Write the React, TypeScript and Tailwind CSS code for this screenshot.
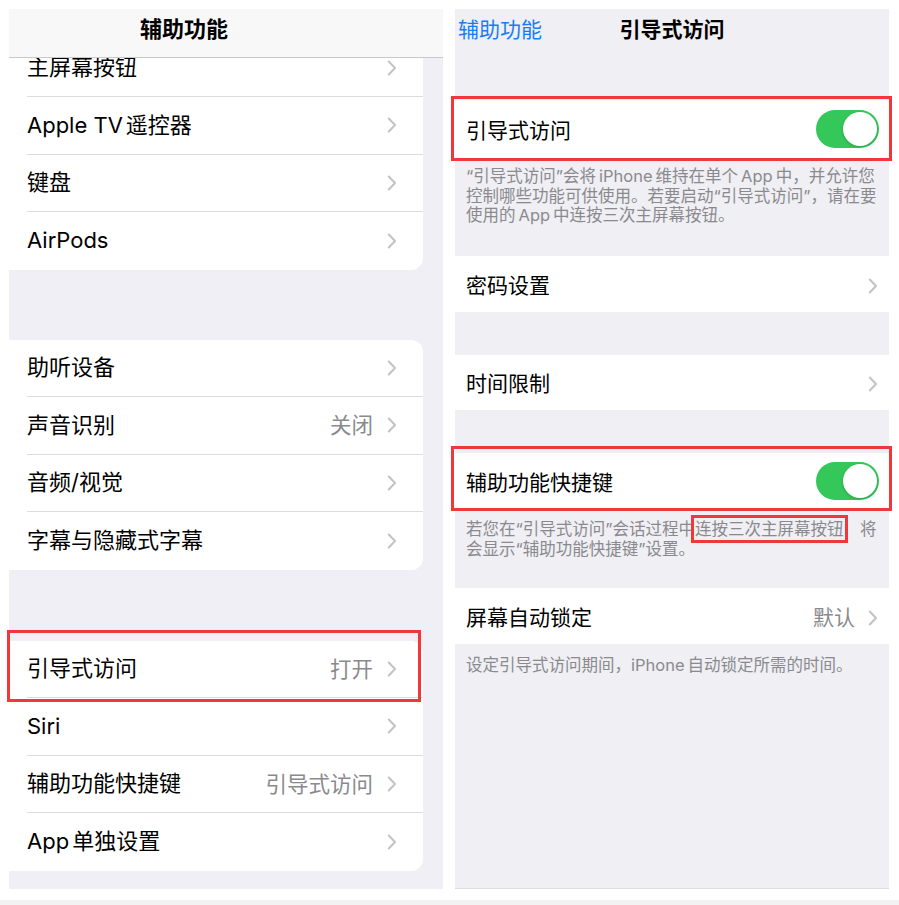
import React from "react";

const FONT = "font-['Inter','Noto_Sans_CJK_SC',sans-serif]";

const Chevron = () => (
  <svg width="10" height="16" viewBox="0 0 10 16" className="shrink-0">
    <path d="M1.8 1.6 L8 8 L1.8 14.4" fill="none" stroke="#c4c4c8" strokeWidth="2.1" strokeLinecap="round" strokeLinejoin="round" />
  </svg>
);

const Toggle = () => (
  <div className="w-[63px] h-[38px] rounded-full bg-[#34c759] p-[2px] flex justify-end shrink-0">
    <div className="w-[34px] h-[34px] rounded-full bg-white shadow-[0_1px_3px_rgba(0,0,0,0.18)]" />
  </div>
);

type Row = { label: React.ReactNode; key: string; value?: string };

const LeftCard = ({ rows, className = "" }: { rows: Row[]; className?: string }) => (
  <div className={`mr-[20px] bg-white rounded-r-[12px] ${className}`}>
    {rows.map((r, i) => (
      <div key={r.key} className="h-[57.5px] pl-[18px] flex">
        <div
          className={
            "flex-1 flex items-center pr-[26px] " +
            (i < rows.length - 1 ? "border-b border-[#dcdce0]" : "")
          }
        >
          <span className="flex-1 text-[22px] text-black">{r.label}</span>
          {r.value && <span className="text-[21.5px] text-[#8a8a8e] mr-[14px]">{r.value}</span>}
          <Chevron />
        </div>
      </div>
    ))}
  </div>
);

const RightRow = ({ label, value, toggle, h }: { label: string; value?: string; toggle?: boolean; h: string }) => (
  <div className={`${h} bg-white flex items-center pl-[11px] ${toggle ? "pr-[10px]" : "pr-[11px]"}`}>
    <span className="flex-1 pt-[3px] text-[21px] text-black">{label}</span>
    {value && <span className="pt-[3px] text-[21px] text-[#8a8a8e] mr-[13px]">{value}</span>}
    {toggle ? <Toggle /> : <div className="pt-[3px]"><Chevron /></div>}
  </div>
);

const RedBox = ({ className }: { className: string }) => (
  <div className={`absolute border-[3px] border-[#f0383b] pointer-events-none ${className}`} />
);

const gap = <span className="inline-block w-[3px]" />;

export default function App() {
  return (
    <div className={`w-[899px] h-[905px] bg-white flex flex-col pt-[9px] overflow-hidden ${FONT}`}>
      <div className="flex pl-[9px] gap-[12px]">
        {/* left screen */}
        <div className="relative w-[434px] h-[880px] bg-[#f0eff5] flex flex-col">
          <div className="h-[49px] shrink-0 bg-[#f8f8f8] border-b border-[#c9c9cd] flex items-center pl-[131px] pb-[7px]">
            <span className="text-[22px] font-semibold text-black">辅助功能</span>
          </div>
          <div className="flex-1 overflow-hidden">
            <LeftCard
              className="-mt-[18.5px]"
              rows={[
                { key: "home", label: "主屏幕按钮" },
                { key: "tv", label: <>Apple TV{gap}遥控器</> },
                { key: "kb", label: "键盘" },
                { key: "pods", label: "AirPods" },
              ]}
            />
            <LeftCard
              className="mt-[70px] rounded-tr-[12px]"
              rows={[
                { key: "hear", label: "助听设备" },
                { key: "sound", label: "声音识别", value: "关闭" },
                { key: "av", label: "音频/视觉" },
                { key: "cc", label: "字幕与隐藏式字幕" },
              ]}
            />
            <LeftCard
              className="mt-[71px]"
              rows={[
                { key: "guided", label: "引导式访问", value: "打开" },
                { key: "siri", label: "Siri" },
                { key: "short", label: "辅助功能快捷键", value: "引导式访问" },
                { key: "app", label: <>App{gap}单独设置</> },
              ]}
            />
          </div>
          <RedBox className="left-[-2px] top-[621px] w-[414px] h-[72px]" />
        </div>

        {/* right screen */}
        <div className="relative w-[434px] h-[880px] bg-[#efeff4] flex flex-col border-b border-[#dedee2]">
          <div className="h-[91px] shrink-0">
            <div className="h-[42px] grid grid-cols-[1fr_auto_1fr] items-center">
              <span className="pl-[3px] text-[21px] text-[#1a7cf5]">辅助功能</span>
              <span className="text-[21px] font-semibold text-black">引导式访问</span>
              <span />
            </div>
          </div>
          <RightRow h="h-[58px]" label="引导式访问" toggle />
          <p className="h-[98px] pt-[9px] pl-[11px] pr-[4px] text-[16.5px] leading-[19.5px] text-[#8a8a8e] whitespace-nowrap">
            “引导式访问”会将{gap}iPhone{gap}维持在单个{gap}App{gap}中，并允许您
            <br />
            控制哪些功能可供使用。若要启动“引导式访问”，请在要
            <br />
            使用的{gap}App{gap}中连按三次主屏幕按钮。
          </p>
          <RightRow h="h-[56px]" label="密码设置" />
          <div className="h-[43px]" />
          <RightRow h="h-[55px]" label="时间限制" />
          <div className="h-[43px]" />
          <RightRow h="h-[56px]" label="辅助功能快捷键" toggle />
          <p className="h-[79px] pt-[11px] pl-[11px] pr-[4px] text-[16.5px] leading-[19.5px] text-[#8a8a8e] whitespace-nowrap">
            若您在“引导式访问”会话过程中
            <span className="outline-3 outline-solid outline-[#f0383b] outline-offset-[1px]">连按三次主屏幕按钮</span>
            <span className="text-[#f0eff5]">，</span>将
            <br />
            会显示“辅助功能快捷键”设置。
          </p>
          <RightRow h="h-[56px]" label="屏幕自动锁定" value="默认" />
          <p className="pt-[12px] pl-[11px] pr-[4px] text-[16.5px] leading-[19.5px] text-[#8a8a8e]">
            设定引导式访问期间，iPhone{gap}自动锁定所需的时间。
          </p>
          <RedBox className="left-[-4px] top-[87px] w-[441px] h-[65px]" />
          <RedBox className="left-[-4px] top-[437px] w-[441px] h-[65px]" />
        </div>
      </div>
      <div className="mt-[11px] h-[5px] bg-[#f3f3f3]" />
    </div>
  );
}
